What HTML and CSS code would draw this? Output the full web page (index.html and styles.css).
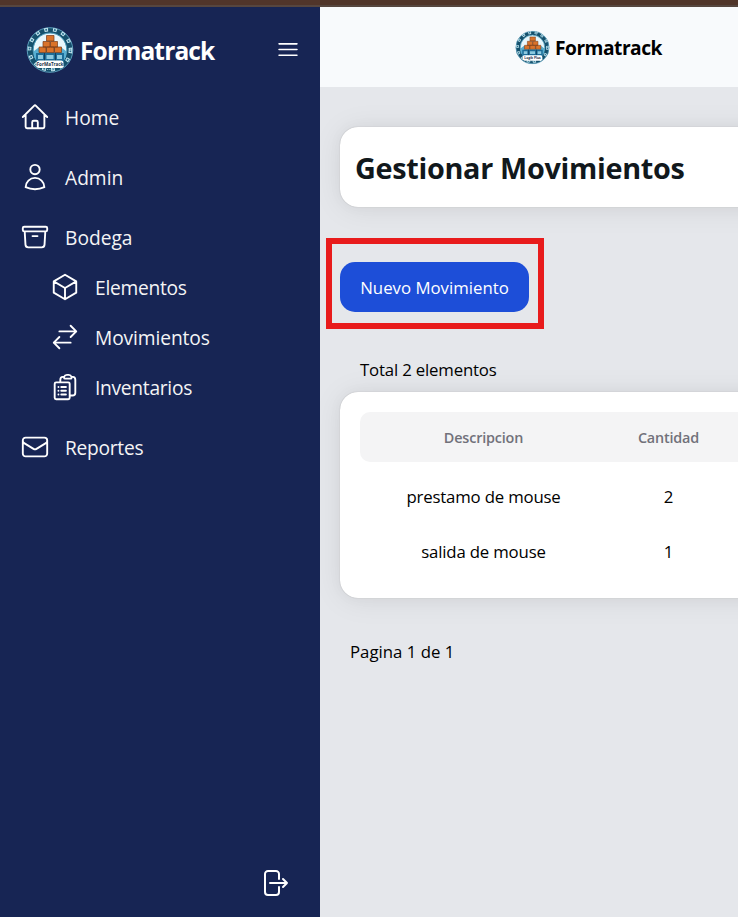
FILE: index.html
```html
<!DOCTYPE html>
<html lang="es">
<head>
<meta charset="utf-8">
<title>Formatrack</title>
<link rel="stylesheet" href="styles.css">
</head>
<body>
<svg class="defs" aria-hidden="true">
  <symbol id="emblem" viewBox="0 0 48 46">
    <ellipse cx="24" cy="23" rx="22.800" ry="22.300" fill="#15506c" stroke="#5b9ebb" stroke-width="1"/>
    <ellipse cx="24" cy="22.500" rx="20.500" ry="20" fill="none" stroke="#c5e6f0" stroke-width="3.600" stroke-dasharray="3.800 5.100"/>
    <ellipse cx="24" cy="22.500" rx="20.500" ry="20" fill="none" stroke="#276f8e" stroke-width="1.700" stroke-dasharray="1.800 7.100" stroke-dashoffset="-1"/>
    <ellipse cx="24" cy="23" rx="16.800" ry="17" fill="#e8f7fc" stroke="#4799b8" stroke-width="1"/>
    <path d="M8 24l4-3h24l4 3v6l-3 5H11l-3-5z" fill="#58afd2"/>
    <g fill="#d9732a" stroke="#753b18" stroke-width=".7">
      <path d="M20.500 8.500h7.500v5.500h-7.500zM17 14.500h7v5.500h-7zM24.500 14.500h7v5.500h-7zM13 20h7v5.500h-7zM20.500 20h7.500v5.500h-7.500zM28.500 20h7v5.500h-7z"/>
    </g>
    <path d="M10 26h28v8H10z" fill="#1c6c97"/>
    <path d="M12 28h5v4h-5zM20.500 28h7v4h-7zM31 28h5v4h-5z" fill="#8cc9df"/>
    <path d="M18.500 26v8M29.500 26v8" stroke="#12405e"/>
    <path d="M19 42.500h10" stroke="#a9d5e4" stroke-width="1" stroke-dasharray="1 1.200"/>
    <rect x="10.500" y="33.500" width="27" height="7.500" rx="2.500" fill="#fff"/>
  </symbol>
</svg>
<div class="topline"></div>
<div class="app">
  <aside class="sidebar">
    <div class="brand">
      <svg class="brand-logo" viewBox="0 0 48 46"><use href="#emblem"/><text x="24" y="38.800" class="plaque">ForMaTrack</text></svg>
      <span class="brand-name">Formatrack</span>
      <svg class="icon menu" viewBox="0 0 24 24"><path d="M3.750 6.750h16.500M3.750 12h16.500m-16.500 5.250h16.500"/></svg>
    </div>
    <nav class="nav">
      <a class="item"><svg class="icon" viewBox="0 0 24 24"><path d="m2.250 12 8.954-8.955c.44-.439 1.152-.439 1.591 0L21.750 12M4.500 9.750v10.125c0 .621.504 1.125 1.125 1.125H9.750v-4.875c0-.621.504-1.125 1.125-1.125h2.250c.621 0 1.125.504 1.125 1.125V21h4.125c.621 0 1.125-.504 1.125-1.125V9.750M8.250 21h8.250"/></svg><span>Home</span></a>
      <a class="item"><svg class="icon" viewBox="0 0 24 24"><path d="M15.750 6a3.750 3.750 0 1 1-7.500 0 3.750 3.750 0 0 1 7.500 0ZM4.501 20.118a7.500 7.500 0 0 1 14.998 0A17.933 17.933 0 0 1 12 21.750c-2.676 0-5.216-.584-7.499-1.632Z"/></svg><span>Admin</span></a>
      <a class="item"><svg class="icon" viewBox="0 0 24 24"><path d="m20.250 7.500-.625 10.632a2.250 2.250 0 0 1-2.247 2.118H6.622a2.250 2.250 0 0 1-2.247-2.118L3.750 7.500M10 11.250h4M3.375 7.500h17.250c.621 0 1.125-.504 1.125-1.125v-1.500c0-.621-.504-1.125-1.125-1.125H3.375c-.621 0-1.125.504-1.125 1.125v1.500c0 .621.504 1.125 1.125 1.125Z"/></svg><span>Bodega</span></a>
      <div class="subnav">
        <a class="item"><svg class="icon" viewBox="0 0 24 24"><path d="m21 7.500-9-5.250L3 7.500m18 0-9 5.250m9-5.250v9l-9 5.250M3 7.500l9 5.250M3 7.500v9l9 5.250m0-9v9"/></svg><span class="tight">Elementos</span></a>
        <a class="item"><svg class="icon" viewBox="0 0 24 24"><path d="M7.500 21 3 16.500m0 0L7.500 12M3 16.500h13.500m0-13.500L21 7.500m0 0L16.500 12M21 7.500H7.500"/></svg><span class="snug">Movimientos</span></a>
        <a class="item"><svg class="icon" viewBox="0 0 24 24"><path d="M9 12h3.750M9 15h3.750M9 18h3.750m3 .75H18a2.250 2.250 0 0 0 2.250-2.250V6.108c0-1.135-.845-2.098-1.976-2.192a48.424 48.424 0 0 0-1.123-.08m-5.801 0c-.065.21-.1.433-.1.664 0 .414.336.75.75.75h4.500a.75.75 0 0 0 .75-.75 2.250 2.250 0 0 0-.1-.664m-5.800 0A2.251 2.251 0 0 1 13.500 2.250H15c1.012 0 1.867.668 2.150 1.586m-5.800 0c-.376.023-.75.05-1.124.08C9.095 4.010 8.250 4.973 8.250 6.108V8.250m0 0H4.875c-.621 0-1.125.504-1.125 1.125v11.250c0 .621.504 1.125 1.125 1.125h9.750c.621 0 1.125-.504 1.125-1.125V9.375c0-.621-.504-1.125-1.125-1.125H8.250ZM6.750 12h.008v.008H6.750V12Zm0 3h.008v.008H6.750V15Zm0 3h.008v.008H6.750V18Z"/></svg><span class="tight">Inventarios</span></a>
      </div>
      <a class="item"><svg class="icon" viewBox="0 0 24 24"><path d="M21.750 6.750v10.500a2.250 2.250 0 0 1-2.250 2.250h-15a2.250 2.250 0 0 1-2.250-2.250V6.750m19.500 0A2.250 2.250 0 0 0 19.500 4.500h-15a2.250 2.250 0 0 0-2.250 2.250m19.500 0v.243a2.250 2.250 0 0 1-1.070 1.916l-7.500 4.615a2.250 2.250 0 0 1-2.360 0L3.320 8.910a2.250 2.250 0 0 1-1.070-1.916V6.750"/></svg><span class="tight">Reportes</span></a>
    </nav>
    <svg class="icon logout" viewBox="0 0 24 24"><path d="M15.750 9V5.250A2.250 2.250 0 0 0 13.500 3h-6a2.250 2.250 0 0 0-2.250 2.250v13.500A2.250 2.250 0 0 0 7.500 21h6a2.250 2.250 0 0 0 2.250-2.250V15m3 0 3-3m0 0-3-3m3 3H9"/></svg>
  </aside>
  <div class="page">
    <header class="header">
      <svg class="header-logo" viewBox="0 0 48 46"><use href="#emblem"/><text x="24" y="38.800" class="plaque">Logik Plus</text></svg>
      <span class="header-name">Formatrack</span>
    </header>
    <main class="main">
      <section class="title-card"><h1 class="title">Gestionar Movimientos</h1></section>
      <div class="highlight"><button class="button">Nuevo Movimiento</button></div>
      <p class="total">Total 2 elementos</p>
      <section class="table-card">
        <div class="row head"><span>Descripcion</span><span>Cantidad</span></div>
        <div class="row"><span>prestamo de mouse</span><span>2</span></div>
        <div class="row"><span>salida de mouse</span><span>1</span></div>
      </section>
      <p class="pager">Pagina 1 de 1</p>
    </main>
  </div>
</div>
</body>
</html>
```
FILE: styles.css
```css
* { box-sizing: border-box; }
body {
  margin: 0;
  height: 917px;
  display: flex;
  flex-direction: column;
  overflow: hidden;
  font-family: "Open Sans", "Noto Sans", sans-serif;
  color: #11181c;
}
h1, p { margin: 0; }
.defs { position: absolute; width: 0; height: 0; }
.topline { height: 7px; flex: none; background: #50352a; border-bottom: 2px solid #56463f; }
.app { flex: 1; display: flex; min-height: 0; }
.icon {
  width: 30px;
  height: 30px;
  flex: none;
  fill: none;
  stroke: #fff;
  stroke-width: 1.5;
  stroke-linecap: round;
  stroke-linejoin: round;
}
.sidebar {
  width: 320px;
  flex: none;
  display: flex;
  flex-direction: column;
  background: #172554;
  color: #f4f4f5;
}
.brand { display: flex; align-items: center; height: 85px; padding: 0 19px 0 26px; }
.brand-logo { width: 48px; height: 46px; }
.brand-name { margin-left: 6px; font-size: 24.500px; font-weight: 700; color: #fff; letter-spacing: -.85px; padding-top: 1px; }
.menu { width: 26px; height: 27px; margin-left: auto; }
.plaque { font: 700 4.500px "Open Sans", sans-serif; fill: #173044; text-anchor: middle; }
.nav { display: flex; flex-direction: column; gap: 10px; padding: 0 20px; }
.item { display: flex; align-items: center; gap: 15px; height: 50px; font-size: 19.200px; }
.tight { letter-spacing: -.28px; }
.snug { letter-spacing: -.1px; }
.subnav { padding-left: 30px; margin-top: -10px; }
.logout { width: 32px; height: 32px; margin: auto 30px 18px auto; }
.page { flex: 1; min-width: 0; background: #e5e7eb; overflow: hidden; }
.header { height: 80px; display: flex; align-items: center; padding-left: 195px; background: #f8fafc; color: #000; }
.header-logo { width: 35px; height: 35px; }
.header-name { margin-left: 5px; font-size: 19.200px; font-weight: 700; letter-spacing: -.5px; }
.main { width: 900px; padding: 40px 20px; }
.title-card, .table-card {
  background: #fff;
  border-radius: 18px;
  box-shadow: 0 0 1px rgba(0, 0, 0, .3), 0 2px 30px rgba(0, 0, 0, .08), 0 0 15px rgba(0, 0, 0, .03);
}
.title-card { height: 80px; display: flex; align-items: center; padding: 2px 15px 0; }
.title { font-size: 28.800px; line-height: 40px; font-weight: 700; letter-spacing: -.31px; }
.highlight { width: 218px; height: 91px; margin: 31px 0 0 -14px; padding: 18px 8px; border: 6px solid #e81b1c; }
.button {
  width: 189px;
  height: 50px;
  border: 0;
  border-radius: 15px;
  padding: 1px 0 0;
  background: #1d4ed8;
  color: #fff;
  font: 400 16.800px "Open Sans", sans-serif;
}
.total { height: 40px; margin: 23px 0 0 20px; font-size: 16.800px; line-height: 36px; letter-spacing: -.18px; color: #000; }
.table-card { height: 206px; padding: 20px; }
.row {
  display: grid;
  grid-template-columns: 247px 123px 1fr;
  align-items: center;
  height: 55px;
  text-align: center;
  font-size: 16.800px;
  letter-spacing: -.18px;
  color: #000;
}
.head { height: 50px; margin-bottom: 7px; border-radius: 10px; background: #f4f4f5; color: #71717a; font-size: 14.400px; font-weight: 600; }
.pager { margin: 32px 0 0 10px; font-size: 16.800px; line-height: 44px; color: #000; }
```
